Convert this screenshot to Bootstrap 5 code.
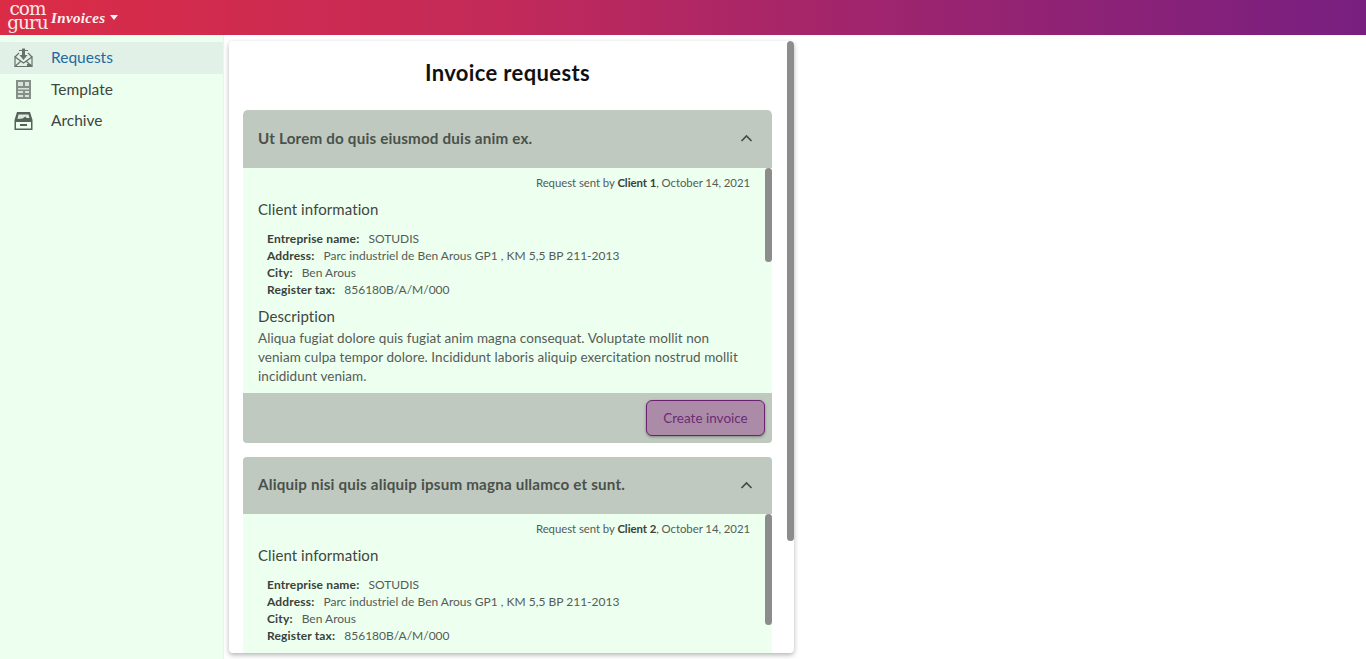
<!DOCTYPE html>
<html lang="en">
<head>
    <meta charset="UTF-8">
    <meta name="viewport" content="width=device-width, initial-scale=1.0">
    <title>Invoice requests</title>
    <link href="https://cdn.jsdelivr.net/npm/bootstrap@5.3.3/dist/css/bootstrap.min.css" rel="stylesheet">
    <style>
        body {
            font-family: Lato, "Noto Sans", sans-serif;
            background-color: #FFFFFF;
            color: #555C56;
            overflow: hidden;
        }
        .top-bar {
            height: 35px;
            padding: 0;
            background: linear-gradient(90deg, #DB2C46 0%, #C42A58 35%, #9A2470 68%, #781F80 100%);
        }
        .brand-logo {
            width: 43px;
            margin-left: 6px;
            color: #FBE7E7;
            font-family: "DejaVu Serif", serif;
            font-size: 18.5px;
            line-height: 14px;
            letter-spacing: -1px;
            padding-bottom: 4px;
        }
        .brand-name {
            margin-left: 2px;
            color: #FFF3F3;
            font-family: "Liberation Serif", serif;
            font-style: italic;
            font-weight: 700;
            font-size: 15px;
            letter-spacing: 0.35px;
            text-decoration: none;
        }
        .brand-name:hover { color: #FFFFFF; }
        .brand-name.dropdown-toggle::after {
            margin-left: 5px;
            vertical-align: 3px;
            border-top-width: 5px;
            border-left-width: 4.5px;
            border-right-width: 4.5px;
        }
        .side-menu {
            width: 223px;
            padding-top: 7px;
            background-color: #EDFFEE;
            box-shadow: 1px 0 1px rgba(0, 0, 0, .06);
        }
        .side-link {
            height: 31.5px;
            padding-left: 14px;
            gap: 18px;
            color: #3F4640;
            font-size: 15.5px;
            text-decoration: none;
        }
        .side-link.current {
            background-color: #E2F1E7;
            color: #24689F;
        }
        .side-link svg { width: 19px; height: 21px; flex: none; }
        .request-panel {
            position: relative;
            width: 565px;
            height: 612px;
            margin: 6px 0 0 6px;
            padding: 0 22px 14px 14px;
            overflow: hidden;
            background-color: #FFFFFF;
            border-radius: 4px;
            box-shadow: 0 2px 5px rgba(0, 0, 0, .3);
        }
        .scroll-thumb {
            position: absolute;
            top: 0;
            right: 0;
            width: 7px;
            background-color: #8B8C8B;
            border-radius: 4px;
        }
        .thumb-panel { height: 500px; }
        .thumb-first { height: 94px; }
        .thumb-second { height: 111px; }
        .panel-title {
            height: 69px;
            margin: 0;
            padding-top: 18px;
            color: #111111;
            font-family: Lato, sans-serif;
            font-size: 22px;
            font-weight: 700;
            line-height: 28px;
            letter-spacing: .35px;
            text-align: center;
        }
        .request-list {
            --bs-accordion-border-width: 0;
            --bs-accordion-color: #555C56;
            --bs-accordion-bg: #EDFFEF;
            --bs-accordion-active-bg: #BFC9BF;
            --bs-accordion-btn-bg: #BFC9BF;
            --bs-accordion-active-color: #4A514B;
            --bs-accordion-btn-color: #4A514B;
            --bs-accordion-btn-focus-box-shadow: none;
            --bs-accordion-btn-padding-x: 15px;
            --bs-accordion-btn-icon-width: 13px;
            --bs-accordion-btn-active-icon: url("data:image/svg+xml,%3csvg xmlns='http://www.w3.org/2000/svg' viewBox='0 0 13 13'%3e%3cpath fill='none' stroke='%23454C46' stroke-width='1.7' d='M1.5 3l5 5 5-5'/%3e%3c/svg%3e");
            --bs-accordion-btn-icon: url("data:image/svg+xml,%3csvg xmlns='http://www.w3.org/2000/svg' viewBox='0 0 13 13'%3e%3cpath fill='none' stroke='%23454C46' stroke-width='1.7' d='M1.5 3l5 5 5-5'/%3e%3c/svg%3e");
        }
        .request-list .accordion-item {
            margin-bottom: 14px;
            border-radius: 4px;
            overflow: hidden;
        }
        .request-list .accordion-button {
            height: 57.6px;
            padding-right: 19px;
            padding-bottom: 18px;
            font-size: 15.2px;
            font-weight: 700;
            letter-spacing: .18px;
            box-shadow: none;
        }
        .request-body {
            position: relative;
            height: 225px;
            overflow: hidden;
            padding: 7px 22px 0 15px;
            background-color: #EDFFEF;
        }
        .sent-line {
            margin-bottom: 9px;
            font-size: 11.4px;
            line-height: 15px;
            letter-spacing: -.06px;
            text-align: right;
        }
        .sent-line strong { color: #3A413B; }
        .block-heading {
            margin-bottom: 0;
            color: #3F4640;
            font-size: 15px;
            font-weight: 400;
            line-height: 20px;
            letter-spacing: .08px;
        }
        .client-facts {
            margin: 11px 0 8px;
            padding-left: 9px;
            list-style: none;
            font-size: 12px;
            line-height: 17px;
        }
        .client-facts strong {
            margin-right: 6px;
            color: #3A413B;
            letter-spacing: .15px;
        }
        .request-text {
            margin: 3px 0 0;
            font-size: 13.5px;
            line-height: 19px;
            letter-spacing: .06px;
        }
        .request-foot {
            height: 50px;
            padding: 7px 7px 0 0;
            background-color: #BFC9BF;
            text-align: right;
        }
        .btn-invoice {
            --bs-btn-padding-x: 0;
            --bs-btn-padding-y: 0;
            --bs-btn-font-size: 13.5px;
            --bs-btn-color: #6C2B72;
            --bs-btn-bg: #AC8BA9;
            --bs-btn-border-color: #6C2170;
            --bs-btn-hover-color: #FFFFFF;
            --bs-btn-hover-bg: #7C1F80;
            --bs-btn-hover-border-color: #6C2170;
            width: 119px;
            height: 36px;
            padding-top: 1px;
            box-shadow: 0 1px 3px rgba(0, 0, 0, .35);
        }
    </style>
</head>
<body>
    <div class="d-flex flex-column vh-100">
        <nav class="navbar top-bar flex-nowrap justify-content-start">
            <div class="brand-logo text-center">com<br>guru</div>
            <div class="dropdown">
                <a class="brand-name dropdown-toggle" href="#" data-bs-toggle="dropdown">Invoices</a>
                <ul class="dropdown-menu">
                    <li><a class="dropdown-item" href="#">Invoices</a></li>
                </ul>
            </div>
        </nav>

        <div class="d-flex flex-grow-1 overflow-hidden">
            <!-- side menu -->
            <div class="side-menu flex-shrink-0">
                <a class="side-link current d-flex align-items-center" href="#">
                    <svg viewBox="0 0 19 21" fill="none" stroke="#667268" stroke-width="1.2">
                        <path d="M1 10l4-4M18 10l-4-4M5 3.500h9M1 10v9.500h17V10L9.500 16z"/>
                        <path d="M1 19.500l6-5.500M18 19.500L12 14"/>
                        <path d="M8 1.500h3V8h2.500l-4 5-4-5H8z" fill="#667268" stroke="none"/>
                        <path d="M13 17h4v2.500h-4z" fill="#667268" stroke="none"/>
                    </svg>
                    Requests
                </a>
                <a class="side-link d-flex align-items-center" href="#">
                    <svg viewBox="0 0 19 21">
                        <path d="M2 1h15v19H2z" fill="#838F87"/>
                        <path d="M4 3h5v4H4zM11 3h4v4h-4zM4 9h11v1.500H4zM4 12h5v2H4zM11 12h4v2h-4zM4 16h5v2H4zM11 16h4v2h-4z" fill="#D5E3D8"/>
                    </svg>
                    Template
                </a>
                <a class="side-link d-flex align-items-center" href="#">
                    <svg viewBox="0 0 19 21">
                        <path d="M3 2h13l2.500 8v10H.5V10z" fill="#56635A"/>
                        <path d="M4.500 4.500h10l1 3.500h-3l-1-1.500-3 2-5 .5z" fill="#DDEBDF"/>
                        <path d="M2 12h15v6.500H2z" fill="#EDFFEE"/>
                        <path d="M6 14h7v2H6z" fill="#56635A"/>
                    </svg>
                    Archive
                </a>
            </div>

            <!-- invoice requests -->
            <div class="request-panel flex-shrink-0">
                <div class="scroll-thumb thumb-panel"></div>
                <h1 class="panel-title">Invoice requests</h1>
                <div class="accordion request-list">
                    <div class="accordion-item">
                        <h2 class="accordion-header">
                            <button class="accordion-button" type="button" data-bs-toggle="collapse" data-bs-target="#request1">Ut Lorem do quis eiusmod duis anim ex.</button>
                        </h2>
                        <div id="request1" class="accordion-collapse collapse show">
                            <div class="request-body">
                                <div class="scroll-thumb thumb-first"></div>
                                <p class="sent-line">Request sent by <strong>Client 1</strong>, October 14, 2021</p>
                                <h3 class="block-heading">Client information</h3>
                                <ul class="client-facts">
                                    <li><strong>Entreprise name:</strong> SOTUDIS</li>
                                    <li><strong>Address:</strong> Parc industriel de Ben Arous GP1 , KM 5,5 BP 211-2013</li>
                                    <li><strong>City:</strong> Ben Arous</li>
                                    <li><strong>Register tax:</strong> 856180B/A/M/000</li>
                                </ul>
                                <h3 class="block-heading">Description</h3>
                                <p class="request-text">Aliqua fugiat dolore quis fugiat anim magna consequat. Voluptate mollit non veniam culpa tempor dolore. Incididunt laboris aliquip exercitation nostrud mollit incididunt veniam.</p>
                            </div>
                            <div class="request-foot">
                                <button class="btn btn-invoice" type="button">Create invoice</button>
                            </div>
                        </div>
                    </div>

                    <div class="accordion-item mb-0">
                        <h2 class="accordion-header">
                            <button class="accordion-button" type="button" data-bs-toggle="collapse" data-bs-target="#request2">Aliquip nisi quis aliquip ipsum magna ullamco et sunt.</button>
                        </h2>
                        <div id="request2" class="accordion-collapse collapse show">
                            <div class="request-body">
                                <div class="scroll-thumb thumb-second"></div>
                                <p class="sent-line">Request sent by <strong>Client 2</strong>, October 14, 2021</p>
                                <h3 class="block-heading">Client information</h3>
                                <ul class="client-facts">
                                    <li><strong>Entreprise name:</strong> SOTUDIS</li>
                                    <li><strong>Address:</strong> Parc industriel de Ben Arous GP1 , KM 5,5 BP 211-2013</li>
                                    <li><strong>City:</strong> Ben Arous</li>
                                    <li><strong>Register tax:</strong> 856180B/A/M/000</li>
                                </ul>
                            </div>
                        </div>
                    </div>
                </div>
            </div>
        </div>
    </div>

    <script src="https://cdn.jsdelivr.net/npm/bootstrap@5.3.3/dist/js/bootstrap.bundle.min.js"></script>
</body>
</html>
